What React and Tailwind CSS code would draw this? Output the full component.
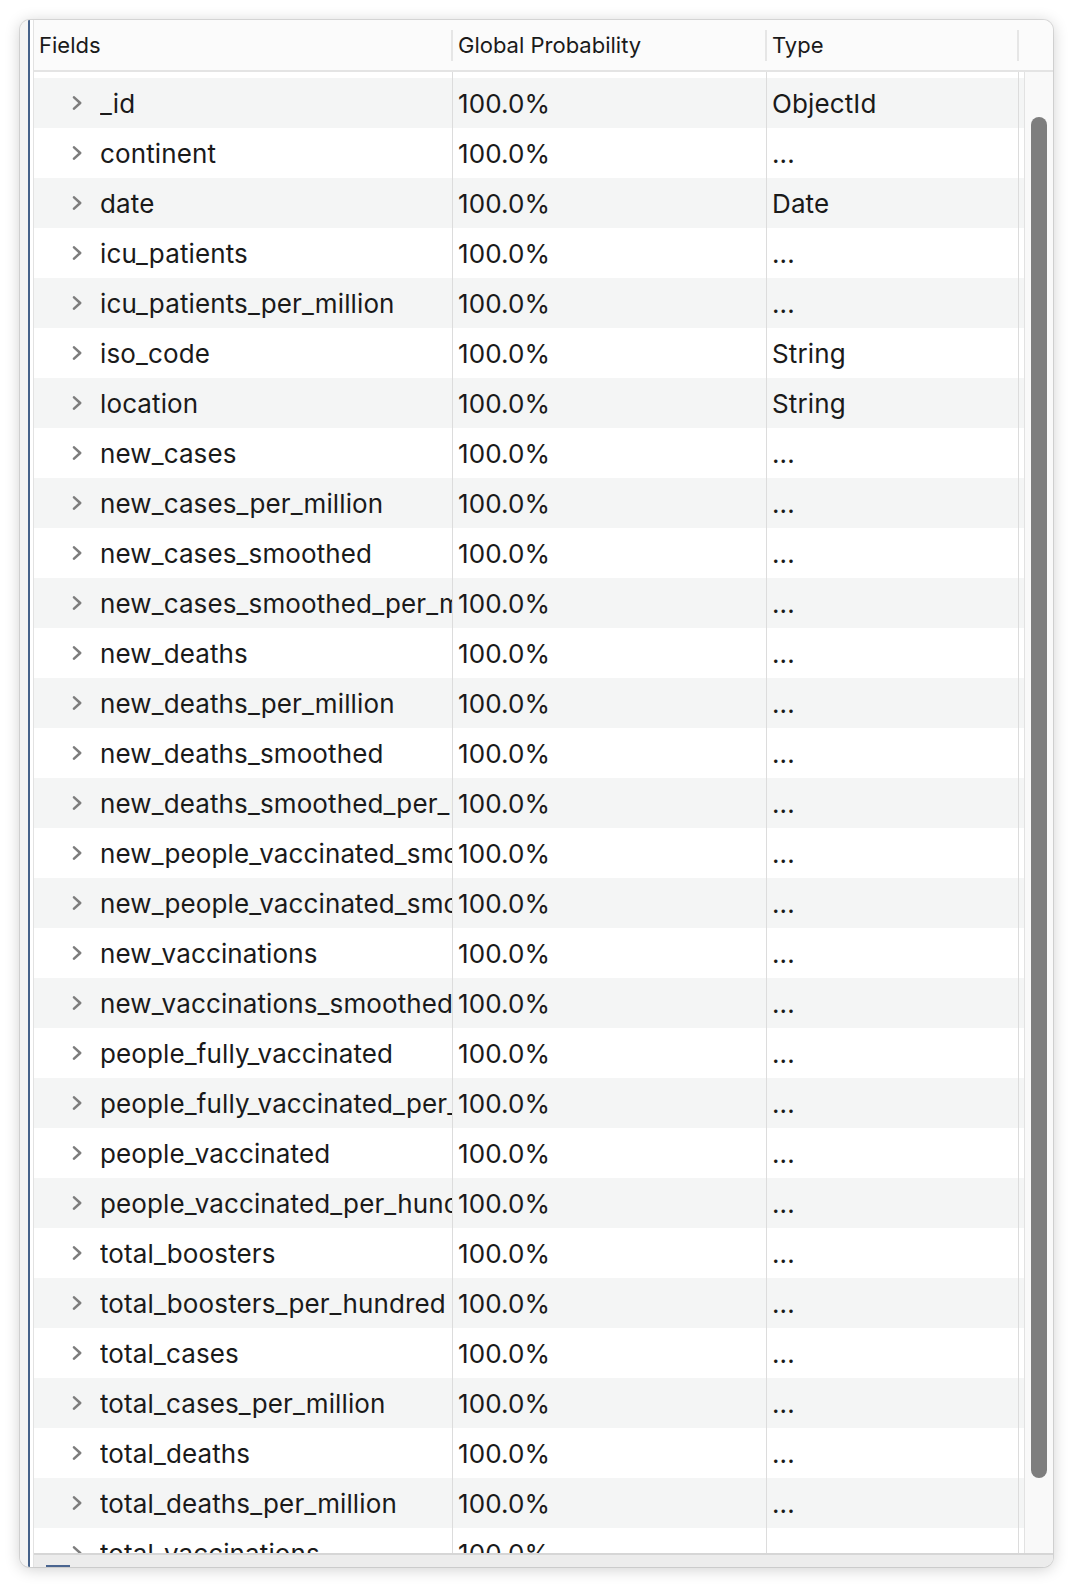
const fields = [
  ["_id", "ObjectId"],
  ["continent", "..."],
  ["date", "Date"],
  ["icu_patients", "..."],
  ["icu_patients_per_million", "..."],
  ["iso_code", "String"],
  ["location", "String"],
  ["new_cases", "..."],
  ["new_cases_per_million", "..."],
  ["new_cases_smoothed", "..."],
  ["new_cases_smoothed_per_million", "..."],
  ["new_deaths", "..."],
  ["new_deaths_per_million", "..."],
  ["new_deaths_smoothed", "..."],
  ["new_deaths_smoothed_per_million", "..."],
  ["new_people_vaccinated_smoothed", "..."],
  ["new_people_vaccinated_smoothed_per_hundred", "..."],
  ["new_vaccinations", "..."],
  ["new_vaccinations_smoothed", "..."],
  ["people_fully_vaccinated", "..."],
  ["people_fully_vaccinated_per_hundred", "..."],
  ["people_vaccinated", "..."],
  ["people_vaccinated_per_hundred", "..."],
  ["total_boosters", "..."],
  ["total_boosters_per_hundred", "..."],
  ["total_cases", "..."],
  ["total_cases_per_million", "..."],
  ["total_deaths", "..."],
  ["total_deaths_per_million", "..."],
  ["total_vaccinations", "..."],
];

const Chevron = () => (
  <svg width="10" height="14" viewBox="0 0 10 14" className="shrink-0">
    <polyline points="2,1.3 8.2,7 2,12.7" fill="none" stroke="#7d7d7d" strokeWidth="2.5" strokeLinecap="round" strokeLinejoin="round" />
  </svg>
);

const HeaderCell = ({ label, width }) => (
  <div className={`flex items-center h-full shrink-0 ${width}`}>
    <span className="flex-1 pl-[5px]">{label}</span>
    <div className="w-[2px] h-[31px] bg-[#e6e6e6]" />
  </div>
);

const Row = ({ name, type, idx }) => (
  <div className={`flex h-[50px] shrink-0 ${idx % 2 === 0 ? "bg-[#f4f5f5]" : "bg-white"}`}>
    <div className="w-[419px] shrink-0 flex items-center pl-[38px] gap-[18px] overflow-hidden border-r border-[#dcdcdc] whitespace-nowrap">
      <Chevron />
      <span className="flex-1 min-w-0 overflow-hidden">{name}</span>
    </div>
    <div className="w-[314px] shrink-0 flex items-center pl-[5px] border-r border-[#dcdcdc]">100.0%</div>
    <div className="w-[252px] shrink-0 flex items-center pl-[5px] border-r border-[#dcdcdc]">{type}</div>
    <div className="flex-1" />
  </div>
);

export default function App() {
  return (
    <div className="w-[1074px] h-[1588px] bg-white pt-[20px] pl-[20px] pr-[21px] pb-[21px] font-['Inter',sans-serif] text-[#1a1a1a]">
      <div className="w-full h-full flex rounded-[10px] overflow-hidden bg-white shadow-[0_2px_16px_rgba(0,0,0,0.2)] ring-1 ring-black/10">
        <div className="w-[8px] bg-[#f4f4f4] shrink-0" />
        <div className="w-[2px] bg-[#46628a] shrink-0" />
        <div className="w-[3px] bg-white shrink-0" />
        <div className="w-[1px] bg-[#e2e2e2] shrink-0" />
        <div className="flex-1 flex flex-col min-w-0">
          <div className="h-[50px] shrink-0 flex bg-[#fbfbfb] text-[22px]">
            <HeaderCell label="Fields" width="w-[419px]" />
            <HeaderCell label="Global Probability" width="w-[314px]" />
            <HeaderCell label="Type" width="w-[252px]" />
            <div className="flex-1" />
          </div>
          <div className="h-[2px] shrink-0 bg-[#e4e4e4]" />
          <div className="flex-1 flex min-h-0">
            <div className="w-[990px] shrink-0 flex flex-col overflow-hidden text-[26px] tracking-[0.12px]">
              <div className="flex h-[6px] shrink-0">
                <div className="w-[419px] shrink-0 border-r border-[#dcdcdc]" />
                <div className="w-[314px] shrink-0 border-r border-[#dcdcdc]" />
                <div className="w-[252px] shrink-0 border-r border-[#dcdcdc]" />
              </div>
              {fields.map(([name, type], idx) => (
                <Row key={name} name={name} type={type} idx={idx} />
              ))}
            </div>
            <div className="flex-1 bg-[#f9f9f9] border-l border-[#e2e2e2] pt-[45px] pb-[75px] flex justify-center">
              <div className="w-[16px] h-full rounded-full bg-[#7e7e7e]" />
            </div>
          </div>
          <div className="h-[14px] shrink-0 border-t-2 border-[#d6d6d6] bg-[#ececec] flex items-end pl-[12px]">
            <div className="w-[24px] h-[2px] bg-[#4a6590]" />
          </div>
        </div>
      </div>
    </div>
  );
}
